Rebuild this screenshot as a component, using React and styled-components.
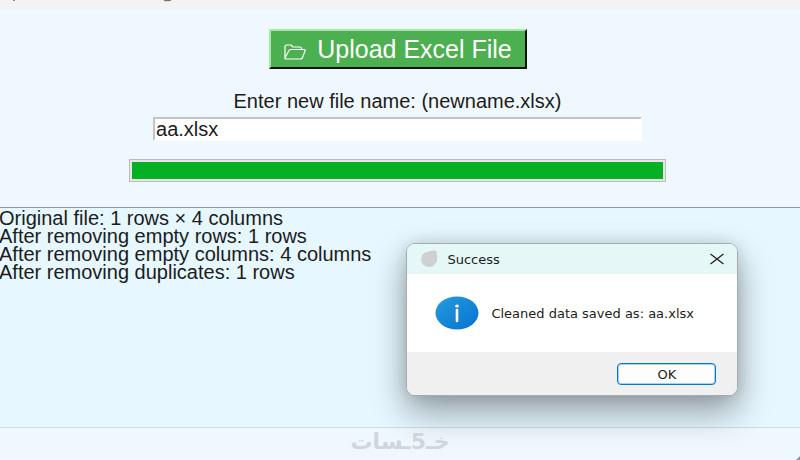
import React, { useState } from 'react';
import styled, { createGlobalStyle } from 'styled-components';

const GlobalStyle = createGlobalStyle`
	* {
		box-sizing: border-box;
	}
	body {
		margin: 0;
		font-family: 'Liberation Sans', Arial, sans-serif;
		color: #1c1c1c;
	}
`;

const Window = styled.div`
	position: relative;
	display: flex;
	flex-direction: column;
	min-height: 100vh;
	background: #f0f8ff;
	overflow: hidden;
`;

const TitleBar = styled.div`
	height: 9px;
	background: #f3f3f3;
	svg {
		display: block;
	}
`;

const Controls = styled.main`
	display: flex;
	flex-direction: column;
	align-items: center;
	padding: 20px 5px 25px 0;
`;

const UploadButton = styled.button`
	display: flex;
	align-items: center;
	justify-content: center;
	gap: 10px;
	height: 40px;
	width: 258px;
	padding: 0;
	border: 2px solid;
	border-color: #a6e8a8 #111 #111 #a6e8a8;
	background: #4caf50;
	color: white;
	font-family: inherit;
	font-size: 25px;
	line-height: 32px;
	cursor: pointer;
	svg {
		margin-top: 6px;
	}
`;

const Label = styled.label`
	margin-top: 20px;
	font-size: 20px;
	line-height: 24px;
`;

const NameInput = styled.input`
	width: 61.5%;
	height: 24px;
	margin-top: 4px;
	padding: 0 1px;
	border: 2px solid;
	border-color: #c3c3c3 #fff #fff #c3c3c3;
	border-radius: 0;
	outline: none;
	background: white;
	color: inherit;
	font-family: inherit;
	font-size: 20px;
`;

const Progress = styled.div`
	width: 67.6%;
	height: 23px;
	margin-top: 18px;
	padding: 2px;
	border: 1px solid #bcbcbc;
	background: #e6e6e6;
`;

const ProgressFill = styled.div`
	height: 100%;
	background: #06b025;
`;

const Log = styled.section`
	flex: 1;
	padding-top: 1px;
	border-top: 1px solid #8f979c;
	background: #e6f7ff;
	font-size: 20px;
	line-height: 18px;
`;

const LogLine = styled.p`
	margin: 0 0 0 -1px;
`;

const StatusBar = styled.footer`
	position: relative;
	display: flex;
	justify-content: center;
	height: 33px;
	border-top: 1px solid #cfdde4;
	background: #f0f8ff;
`;

const Watermark = styled.span`
	position: relative;
	z-index: 2;
	color: #d0d6dc;
	font-family: 'DejaVu Sans', sans-serif;
	font-size: 22px;
	font-weight: 700;
	line-height: 28px;
`;

const Grip = styled.svg`
	position: absolute;
	right: 0;
	bottom: 0;
`;

const Dialog = styled.div`
	position: absolute;
	z-index: 1;
	top: 243px;
	left: 50.8%;
	width: 332px;
	border: 1px solid #a3acb0;
	border-radius: 9px;
	background: white;
	box-shadow: 0 16px 34px rgba(0, 0, 0, 0.36), 0 0 16px rgba(0, 0, 0, 0.12);
	font-family: 'DejaVu Sans', sans-serif;
	font-size: 13px;
	overflow: hidden;
`;

const DialogHeader = styled.header`
	display: flex;
	align-items: center;
	gap: 8px;
	height: 30px;
	padding: 0 13px;
	background: #e6f7f8;
`;

const DialogTitle = styled.h2`
	flex: 1;
	margin: 0;
	font-size: 13px;
	font-weight: 400;
`;

const CloseButton = styled.button`
	display: flex;
	padding: 0;
	border: none;
	background: none;
	cursor: pointer;
`;

const DialogBody = styled.div`
	display: flex;
	align-items: center;
	gap: 12px;
	height: 78px;
	padding: 0 28px;
`;

const Message = styled.p`
	margin: 0;
	white-space: nowrap;
`;

const DialogFooter = styled.footer`
	display: flex;
	justify-content: flex-end;
	height: 43px;
	padding: 11px 21px;
	background: #f0f0f0;
`;

const OkButton = styled.button`
	width: 99px;
	height: 22px;
	padding: 0;
	border: 1px solid #0078d4;
	border-radius: 4px;
	background: #fdfdfd;
	box-shadow: inset 0 0 0 1px #a8d2f2;
	color: inherit;
	font-family: inherit;
	font-size: 13px;
	cursor: pointer;
`;

const logLines = [
	'Original file: 1 rows × 4 columns',
	'After removing empty rows: 1 rows',
	'After removing empty columns: 4 columns',
	'After removing duplicates: 1 rows',
];

const FolderIcon = () => (
	<svg width="24" height="18" viewBox="0 0 24 18" fill="none" stroke="white" strokeWidth="1.2" strokeLinejoin="round">
		<path d="M2 15V3.5Q2 2 3.5 2H8L10 4H17Q18.500 4 18.500 5.500V6.500" />
		<path d="M2 15L6 7.500Q6.500 6.500 8 6.500H21Q22.500 6.500 22 8L19.500 14.500Q19 16 17.500 16H3Q1.500 16 2 15Z" />
	</svg>
);

const InfoIcon = () => (
	<svg width="44" height="34" viewBox="0 0 44 34">
		<defs>
			<linearGradient id="info" x1="0" y1="0" x2="1" y2="1">
				<stop offset="0" stopColor="#269cdf" />
				<stop offset="1" stopColor="#0572d0" />
			</linearGradient>
		</defs>
		<ellipse cx="22" cy="17" rx="21.5" ry="16.500" fill="url(#info)" />
		<ellipse cx="22" cy="10" rx="1.900" ry="1.500" fill="white" />
		<path d="M22 14V25" stroke="white" strokeWidth="2.600" strokeLinecap="round" />
	</svg>
);

const App = () => {
	const [fileName, setFileName] = useState('aa.xlsx');
	const [open, setOpen] = useState(true);
	const [progress] = useState(100);

	return (
		<>
			<GlobalStyle />
			<Window>
				<TitleBar>
					<svg width="180" height="3" aria-hidden="true">
						<path d="M14 0V1" stroke="#8a8a8a" strokeWidth="2" />
						<path d="M164 0Q167 1 171 0" stroke="#777" strokeWidth="1.500" fill="none" />
					</svg>
				</TitleBar>
				<Controls>
					<UploadButton>
						<FolderIcon />
						Upload Excel File
					</UploadButton>
					<Label htmlFor="file-name">Enter new file name: (newname.xlsx)</Label>
					<NameInput id="file-name" type="text" value={fileName} onChange={(e) => setFileName(e.target.value)} />
					<Progress role="progressbar" aria-label="Progress" aria-valuenow={progress}>
						<ProgressFill style={{ width: `${progress}%` }} />
					</Progress>
				</Controls>
				<Log>
					{logLines.map((line) => (
						<LogLine key={line}>{line}</LogLine>
					))}
				</Log>
				<StatusBar>
					<Watermark lang="ar" dir="rtl">خـ5ـسات</Watermark>
					<Grip width="4" height="4">
						<path d="M4 0V4H0Z" fill="#8c979d" />
					</Grip>
				</StatusBar>
				{open && (
					<Dialog role="dialog" aria-labelledby="dialog-title">
						<DialogHeader>
							<svg width="19" height="18" viewBox="0 0 19 18">
								<path d="M16.500 1Q18 9 16.500 12Q14 17 9 17Q1 16 1 9Q2 2 9 1.500Q13 0 16.500 1Z" fill="#cfd1d1" />
							</svg>
							<DialogTitle id="dialog-title">Success</DialogTitle>
							<CloseButton aria-label="Close" onClick={() => setOpen(false)}>
								<svg width="14" height="12" viewBox="0 0 14 12" stroke="#222" strokeWidth="1.300">
									<path d="M0.500 1L13.500 11M13.500 1L0.500 11" />
								</svg>
							</CloseButton>
						</DialogHeader>
						<DialogBody>
							<InfoIcon />
							<Message>Cleaned data saved as: aa.xlsx</Message>
						</DialogBody>
						<DialogFooter>
							<OkButton onClick={() => setOpen(false)}>OK</OkButton>
						</DialogFooter>
					</Dialog>
				)}
			</Window>
		</>
	);
};

export default App;
